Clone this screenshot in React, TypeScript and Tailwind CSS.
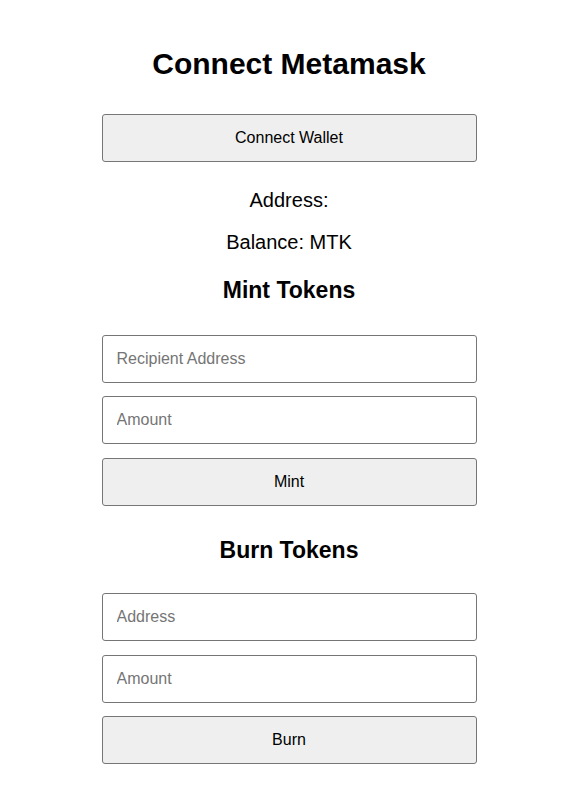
import React from 'react';

const font = { fontFamily: '"Liberation Sans", Arial, sans-serif' };

const inputClass =
  'block w-full h-12 rounded-[3px] border border-[#767676] bg-white px-[14px] text-base text-black placeholder:text-[#757575] outline-none';
const buttonClass =
  'block w-full h-12 rounded-[3px] border border-[#767676] bg-[#efefef] text-base text-black';

export default function App() {
  const [account] = React.useState('');
  const [balance] = React.useState('');
  const [mintTo, setMintTo] = React.useState('');
  const [mintAmount, setMintAmount] = React.useState('');
  const [burnFrom, setBurnFrom] = React.useState('');
  const [burnAmount, setBurnAmount] = React.useState('');

  return (
    <div className="min-h-screen bg-white pl-px" style={font}>
      <div className="mx-auto w-[375px] text-center text-black">
        <h1 className="pt-[46px] text-[30px] leading-[36px] font-bold">Connect Metamask</h1>

        <button className={`${buttonClass} mt-[32px]`}>Connect Wallet</button>

        <p className="mt-[26px] text-[20px] leading-[24px]">Address: {account}</p>
        <p className="mt-[18px] text-[20px] leading-[24px]">Balance: {balance} MTK</p>

        <h2 className="mt-[22px] text-[23px] leading-[28px] font-bold">Mint Tokens</h2>
        <input
          className={`${inputClass} mt-[31px]`}
          placeholder="Recipient Address"
          value={mintTo}
          onChange={(e) => setMintTo(e.target.value)}
        />
        <input
          className={`${inputClass} mt-[13px]`}
          placeholder="Amount"
          value={mintAmount}
          onChange={(e) => setMintAmount(e.target.value)}
        />
        <button className={`${buttonClass} mt-[14px]`}>Mint</button>

        <h2 className="mt-[30px] text-[23px] leading-[28px] font-bold">Burn Tokens</h2>
        <input
          className={`${inputClass} mt-[29px]`}
          placeholder="Address"
          value={burnFrom}
          onChange={(e) => setBurnFrom(e.target.value)}
        />
        <input
          className={`${inputClass} mt-[14px]`}
          placeholder="Amount"
          value={burnAmount}
          onChange={(e) => setBurnAmount(e.target.value)}
        />
        <button className={`${buttonClass} mt-[13px]`}>Burn</button>
      </div>
    </div>
  );
}
